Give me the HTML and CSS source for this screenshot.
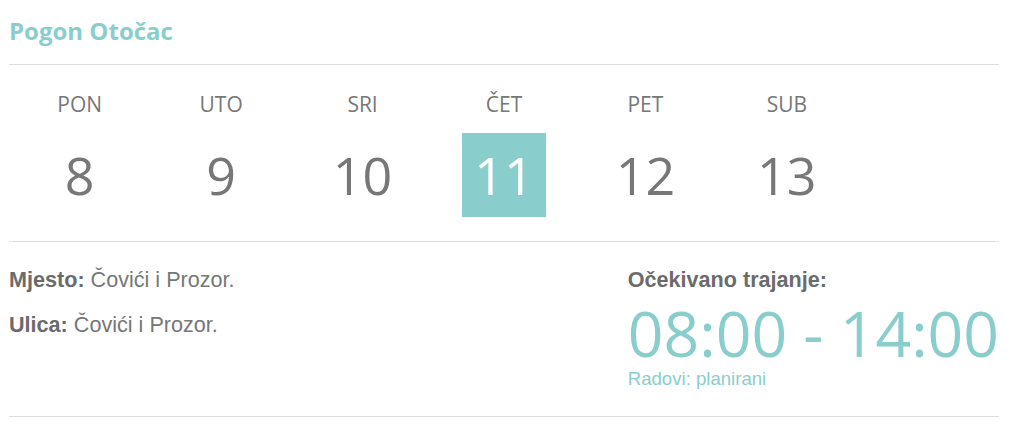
FILE: index.html
```html
<!DOCTYPE html>
<html lang="hr">
<head>
    <meta charset="UTF-8">
    <meta name="viewport" content="width=device-width, initial-scale=1.0">
    <title>Pogon Otočac</title>
    <link rel="stylesheet" href="styles.css">
</head>
<body>
    <div class="outage">
        <h2 class="plant">Pogon Otočac</h2>

        <!-- Week picker -->
        <div class="week">
            <div class="day"><span class="day-name">PON</span><span class="day-num">8</span></div>
            <div class="day"><span class="day-name">UTO</span><span class="day-num">9</span></div>
            <div class="day"><span class="day-name">SRI</span><span class="day-num">10</span></div>
            <div class="day active"><span class="day-name">ČET</span><span class="day-num">11</span></div>
            <div class="day"><span class="day-name">PET</span><span class="day-num">12</span></div>
            <div class="day"><span class="day-name">SUB</span><span class="day-num">13</span></div>
            <div class="day"></div>
        </div>

        <!-- Details -->
        <div class="details">
            <div class="place">
                <p><strong>Mjesto:</strong> Čovići i Prozor.</p>
                <p><strong>Ulica:</strong> Čovići i Prozor.</p>
            </div>
            <div class="duration">
                <strong class="duration-label">Očekivano trajanje:</strong>
                <div class="duration-time">08:00 - 14:00</div>
                <div class="duration-status">Radovi: planirani</div>
            </div>
        </div>
    </div>
</body>
</html>
```

FILE: styles.css
```css
body {
    margin: 0;
    background-color: #fff;
    font-family: "Open Sans", sans-serif;
    color: #777;
}

.outage {
    padding: 0 25px 0 9px;
}

.plant {
    margin: 0;
    padding: 15px 0 17px;
    font-size: 24px;
    line-height: 32px;
    font-weight: 700;
    color: #89cecd;
    border-bottom: 1px solid #ddd;
}

.week {
    display: grid;
    grid-template-columns: repeat(7, 1fr);
    padding: 25px 0 24px;
    border-bottom: 1px solid #ddd;
}

.day {
    display: flex;
    flex-direction: column;
    align-items: center;
}

.day-name {
    font-size: 21px;
    line-height: 28px;
    color: #777;
}

.day-num {
    margin-top: 15px;
    width: 84px;
    height: 84px;
    font-size: 52px;
    line-height: 84px;
    text-align: center;
    color: #777;
}

.day.active .day-num {
    background-color: #89cecd;
    color: #fff;
}

.details {
    display: grid;
    grid-template-columns: 62.5% 37.5%;
    padding: 25px 0 26px;
    border-bottom: 1px solid #ddd;
    font-family: "Liberation Sans", Arial, sans-serif;
}

.place p {
    margin: 0 0 20px;
    font-size: 21.6px;
    line-height: 25px;
}

.place strong,
.duration-label {
    color: #6b6b6b;
}

.duration-label {
    display: block;
    font-size: 21.6px;
    line-height: 25px;
}

.duration-time {
    margin-top: 8px;
    font-family: "Open Sans", sans-serif;
    font-size: 62.5px;
    line-height: 66px;
    color: #89cecd;
    white-space: nowrap;
}

.duration-status {
    margin-top: 2px;
    font-size: 18.6px;
    line-height: 22px;
    color: #89cecd;
}
```
